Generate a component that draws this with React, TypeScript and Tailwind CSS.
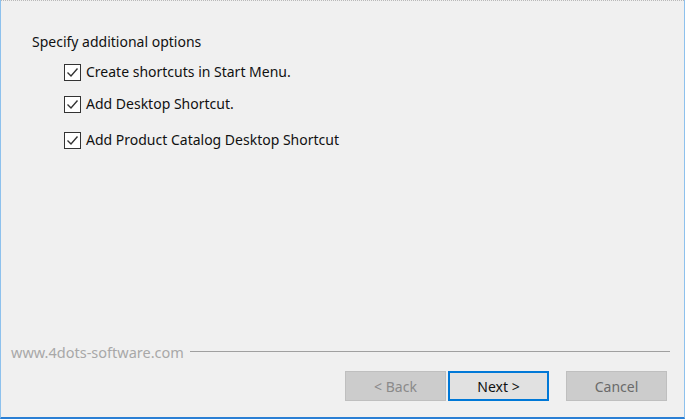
import React from "react";

function Check({ label }: { label: string }) {
  return (
    <div className="flex items-center h-[18px]">
      <div className="w-[17px] h-[17px] border border-[#333333] bg-white flex items-center justify-center shrink-0">
        <svg width="13" height="13" viewBox="0 0 13 13">
          <path d="M1.5 6.5 L5 10 L11.5 2.5" fill="none" stroke="#333333" strokeWidth="1.4" />
        </svg>
      </div>
      <span className="ml-[5px] text-[14px] text-[#111111] leading-none">{label}</span>
    </div>
  );
}

export default function App() {
  return (
    <div
      className="w-[685px] h-[419px] bg-[#f0f0f0] flex flex-col border-l border-l-[#8dc1ed] border-r border-r-[#8dc1ed] border-b-2 border-b-[#2a7fd4]"
      style={{ fontFamily: '"Noto Sans", "Open Sans", sans-serif' }}
    >
      <div className="h-px border-t border-dotted border-[#b8b8b8]"></div>
      <div className="pl-[31px] pt-[34px]">
        <div className="text-[14px] text-[#111111] leading-none h-[16px]">Specify additional options</div>
        <div className="pl-[32px] mt-[12px] flex flex-col">
          <div className="h-[18px] flex items-center"><Check label="Create shortcuts in Start Menu." /></div>
          <div className="h-[18px] mt-[14px] flex items-center"><Check label="Add Desktop Shortcut." /></div>
          <div className="h-[18px] mt-[18px] flex items-center"><Check label="Add Product Catalog Desktop Shortcut" /></div>
        </div>
      </div>
      <div className="mt-auto">
        <div className="flex items-center pl-[10px] pr-[14px]">
          <span className="text-[14.5px] text-[#a8a8a8] leading-none">www.4dots-software.com</span>
          <div className="flex-1 ml-[6px] border-t border-[#a0a0a0]"></div>
        </div>
        <div className="flex justify-end pr-[17px] mt-[12px] mb-[16px]">
          <div className="w-[101px] h-[30px] bg-[#cccccc] border border-[#bfbfbf] flex items-center justify-center text-[14px] text-[#8a8a8a]">&lt; Back</div>
          <div className="w-[101px] h-[30px] ml-[2px] bg-[#e1e1e1] border-2 border-[#0078d7] flex items-center justify-center text-[14px] text-[#111111]">Next &gt;</div>
          <div className="w-[101px] h-[30px] ml-[17px] bg-[#cccccc] border border-[#bfbfbf] flex items-center justify-center text-[14px] text-[#6a6a6a]">Cancel</div>
        </div>
      </div>
    </div>
  );
}
